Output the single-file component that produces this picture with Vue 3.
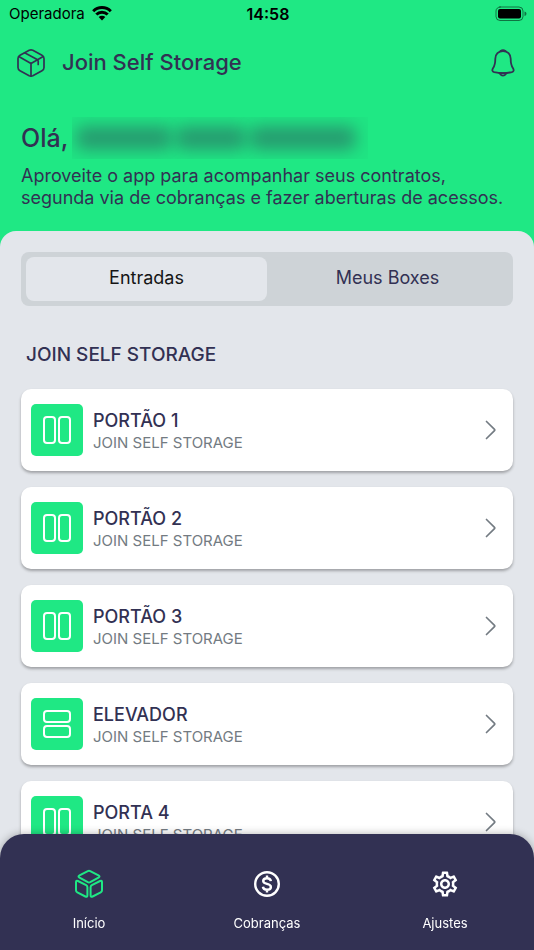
<script setup>
import { ref } from 'vue'

const tab = ref('entradas')
const page = ref('inicio')

const tabs = [
    { id: 'entradas', label: 'Entradas' },
    { id: 'boxes', label: 'Meus Boxes' },
]

const entries = [
    { name: 'PORTÃO 1', place: 'JOIN SELF STORAGE', kind: 'gate' },
    { name: 'PORTÃO 2', place: 'JOIN SELF STORAGE', kind: 'gate' },
    { name: 'PORTÃO 3', place: 'JOIN SELF STORAGE', kind: 'gate' },
    { name: 'ELEVADOR', place: 'JOIN SELF STORAGE', kind: 'lift' },
    { name: 'PORTA 4', place: 'JOIN SELF STORAGE', kind: 'gate' },
]

const pages = [
    { id: 'inicio', label: 'Início' },
    { id: 'cobrancas', label: 'Cobranças' },
    { id: 'ajustes', label: 'Ajustes' },
]
</script>

<template>
    <div class="app">
        <header class="header">
            <div class="status">
                <div class="carrier">
                    <span>Operadora</span>
                    <svg class="wifi" viewBox="0 0 20 15" aria-hidden="true">
                        <path d="M1.2 5.2a12.6 12.6 0 0 1 17.6 0" />
                        <path d="M4.3 8.5a8.1 8.1 0 0 1 11.4 0" />
                        <path class="solid" d="M10 14.4 6.7 11.1a4.7 4.7 0 0 1 6.6 0z" />
                    </svg>
                </div>
                <span class="clock">14:58</span>
                <svg class="battery" viewBox="0 0 32 16" aria-hidden="true">
                    <rect class="shell" x="1" y="1" width="27" height="13.5" rx="4" />
                    <rect x="3" y="3" width="23" height="9.5" rx="2" />
                    <path class="cap" d="M29.5 5.5q2 .6 2 2.3t-2 2.3z" />
                </svg>
            </div>

            <div class="topbar">
                <svg class="box-icon" viewBox="0 0 28 28" aria-hidden="true">
                    <path d="M12.2 1.3Q14 .5 15.8 1.3L25 6.2Q27 7.3 27 9.5V18.5Q27 20.7 25 21.8L15.8 26.7Q14 27.5 12.2 26.7L3 21.8Q1 20.7 1 18.5V9.5Q1 7.3 3 6.2Z" />
                    <path d="M1.8 7.6 14 14.4 26.2 7.6M14 14.4V27M7.6 3.8 20.2 10.4Q21.2 11 21.2 12V15.400" />
                </svg>
                <h1>Join Self Storage</h1>
                <button class="bell" type="button" aria-label="Notificações">
                    <svg viewBox="0 0 24 28" aria-hidden="true">
                        <path d="M12 2C7.5 2 4.3 5.4 4.3 9.7C4.3 15 3.8 16.6 2 19.2C.8 21.5 1.3 22.6 3.2 23.1C8.5 24.3 15.5 24.3 20.8 23.1C22.7 22.6 23.2 21.5 22 19.2C20.2 16.6 19.7 15 19.7 9.7C19.7 5.4 16.5 2 12 2Z" />
                        <path d="M9.6 2Q12 .2 14.4 2ZM8.4 24.2Q12 29 15.6 24.2Z" />
                    </svg>
                </button>
            </div>

            <div class="welcome">
                <h2>
                    <span>Olá,</span>
                    <span class="hidden-name"><i class="first"></i><i class="middle"></i><i class="last"></i></span>
                </h2>
                <p>Aproveite o app para acompanhar seus contratos, segunda via de cobranças e fazer aberturas de acessos.</p>
            </div>
        </header>

        <main class="sheet">
            <div class="tabs" role="tablist">
                <button v-for="t in tabs" :key="t.id" type="button" role="tab" :aria-selected="tab === t.id"
                    :class="{ active: tab === t.id }" @click="tab = t.id">{{ t.label }}</button>
            </div>

            <h3>JOIN SELF STORAGE</h3>

            <div class="list">
                <button v-for="e in entries" :key="e.name" class="card" type="button">
                    <span class="tile">
                        <svg v-if="e.kind === 'gate'" viewBox="0 0 30 30" aria-hidden="true">
                            <rect x="2" y="2" width="11" height="26" rx="3" />
                            <rect x="17" y="2" width="11" height="26" rx="3" />
                        </svg>
                        <svg v-else viewBox="0 0 30 30" aria-hidden="true">
                            <rect x="2" y="2" width="26" height="11" rx="3" />
                            <rect x="2" y="17" width="26" height="11" rx="3" />
                        </svg>
                    </span>
                    <span class="info">
                        <span class="name">{{ e.name }}</span>
                        <span class="place">{{ e.place }}</span>
                    </span>
                    <svg class="chevron" viewBox="0 0 12 20" aria-hidden="true">
                        <path d="M1.5 1.5 9.5 9.3Q10.2 10 9.5 10.7L1.5 18.5" />
                    </svg>
                </button>
            </div>
        </main>

        <nav class="navbar">
            <button v-for="p in pages" :key="p.id" type="button" :class="{ active: page === p.id }"
                @click="page = p.id">
                <svg v-if="p.id === 'inicio'" class="cubes" viewBox="0 0 30 30" aria-hidden="true">
                    <path d="M13.8 2.1Q15 1.5 16.2 2.1L24.500 6.400Q26.500 7.500 24.500 8.600L16.200 13.200Q15 13.800 13.800 13.200L5.500 8.600Q3.500 7.500 5.500 6.400Z" />
                    <path d="M3.9 12 12.2 16.2Q13.4 16.9 13.4 18.2V26.300Q13.400 28.500 11.400 27.500L3.300 23.300Q2 22.600 2 21.200V13.200Q2 11.100 3.900 12Z" />
                    <path d="M26.1 12 17.8 16.2Q16.600 16.900 16.600 18.200V26.300Q16.600 28.500 18.600 27.500L26.700 23.300Q28 22.600 28 21.200V13.200Q28 11.100 26.100 12Z" />
                </svg>
                <svg v-else-if="p.id === 'cobrancas'" class="coin" viewBox="0 0 30 30" aria-hidden="true">
                    <circle cx="15" cy="15" r="11.8" />
                    <path d="M18.9 12.1C18.6 10.3 17.1 9.3 15 9.3C12.8 9.3 11.2 10.3 11.2 12C11.2 15.9 18.9 13.9 18.9 17.9C18.9 19.7 17.2 20.7 15 20.7C12.8 20.7 11.2 19.6 10.9 17.7M15 6.5V9.3M15 20.7V23.5" />
                </svg>
                <svg v-else class="gear" viewBox="0 0 24 24" aria-hidden="true">
                    <path d="M19.430 12.980c.04-.32.07-.64.07-.98s-.03-.66-.07-.98l2.110-1.650c.19-.15.24-.42.120-.64l-2-3.460c-.09-.16-.26-.25-.44-.25-.06 0-.12.01-.17.030l-2.490 1c-.52-.4-1.080-.73-1.690-.98l-.38-2.650C14.460 2.180 14.250 2 14 2h-4c-.25 0-.46.18-.49.420l-.38 2.650c-.61.25-1.170.59-1.690.98l-2.490-1c-.06-.02-.12-.03-.18-.03-.17 0-.34.09-.43.250l-2 3.460c-.13.22-.07.49.120.64l2.110 1.650c-.04.32-.07.65-.07.98s.03.66.07.98l-2.110 1.650c-.19.15-.24.42-.12.640l2 3.460c.09.16.26.25.44.250.06 0 .12-.01.17-.03l2.490-1c.52.4 1.080.73 1.690.98l.38 2.650c.03.24.24.42.49.420h4c.25 0 .46-.18.49-.42l.38-2.650c.61-.25 1.170-.59 1.690-.98l2.490 1c.06.02.12.03.18.030.17 0 .34-.09.43-.25l2-3.460c.12-.22.07-.49-.12-.64l-2.110-1.650zm-1.980-1.710c.04.31.05.52.050.73s-.02.43-.05.730l-.14 1.130.89.7 1.080.84-.7 1.210-1.270-.51-1.040-.42-.9.680c-.43.32-.84.56-1.250.730l-1.060.43-.16 1.130-.2 1.350h-1.400l-.19-1.350-.16-1.130-1.060-.43c-.43-.18-.83-.41-1.230-.71l-.91-.7-1.060.43-1.270.51-.7-1.210 1.080-.84.89-.7-.14-1.130c-.03-.31-.05-.54-.05-.74s.02-.43.050-.73l.14-1.130-.89-.7-1.080-.84.7-1.210 1.270.51 1.040.42.9-.68c.43-.32.84-.56 1.250-.73l1.060-.43.16-1.130.2-1.350h1.390l.19 1.350.16 1.130 1.060.43c.43.18.83.41 1.230.710l.91.7 1.060-.43 1.270-.51.7 1.210-1.070.85-.89.7.14 1.130zM12 8c-2.210 0-4 1.790-4 4s1.790 4 4 4 4-1.790 4-4-1.790-4-4-4zm0 6c-1.100 0-2-.9-2-2s.9-2 2-2 2 .9 2 2-.9 2-2 2z" />
                </svg>
                <span>{{ p.label }}</span>
            </button>
        </nav>
    </div>
</template>

<style>
body {
    margin: 0;
    background: #1fe884;
}
</style>

<style scoped>
.app {
    height: 100vh;
    display: flex;
    flex-direction: column;
    overflow: hidden;
    background: #1fe884;
    color: #323153;
    font-family: Inter, "Liberation Sans", sans-serif;
}

h1,
h2,
h3,
p {
    margin: 0;
}

button {
    border: 0;
    padding: 0;
    background: none;
    color: inherit;
    font: inherit;
    cursor: pointer;
}

svg {
    display: block;
    fill: none;
    stroke: currentColor;
    stroke-width: 2;
    stroke-linecap: round;
    stroke-linejoin: round;
}

.status {
    display: grid;
    grid-template-columns: 1fr auto 1fr;
    align-items: center;
    height: 27px;
    padding: 0 7px 0 9px;
    color: #000;
    font-size: 15px;
}

.carrier {
    display: flex;
    align-items: center;
    gap: 7px;
}

.wifi {
    width: 20px;
    height: 15px;
    stroke-width: 3;
    stroke-linecap: butt;
}

.wifi .solid {
    fill: currentColor;
    stroke: none;
}

.clock {
    font-size: 16px;
    font-weight: 600;
}

.battery {
    width: 32px;
    height: 16px;
    justify-self: end;
    fill: currentColor;
    stroke: none;
}

.battery .shell {
    fill: none;
    stroke: currentColor;
    stroke-width: 1;
    opacity: 0.5;
}

.battery .cap {
    opacity: 0.5;
}

.topbar {
    display: flex;
    align-items: center;
    height: 72px;
    padding: 0 18px 0 17px;
}

.box-icon {
    width: 28px;
    height: 28px;
    margin-right: 17px;
    stroke-width: 1.7;
}

h1 {
    flex: 1;
    padding-bottom: 2px;
    font-size: 22px;
    line-height: 28px;
    font-weight: 500;
}

.bell svg {
    width: 26px;
    height: 28px;
    stroke-width: 1.8;
}

.welcome {
    padding: 18px 21px 22px;
}

h2 {
    display: flex;
    align-items: center;
    gap: 4px;
    height: 42px;
    font-size: 25px;
    font-weight: 500;
}

.hidden-name {
    display: flex;
    align-items: center;
    gap: 4px;
    height: 42px;
    padding: 0 12px 0 4px;
    overflow: hidden;
    background: rgba(50, 49, 83, 0.02);
}

.hidden-name i {
    height: 24px;
    border-radius: 8px;
    background: #323153;
    filter: blur(8px);
    opacity: 0.4;
}

.hidden-name .first {
    width: 96px;
}

.hidden-name .middle {
    width: 70px;
}

.hidden-name .last {
    width: 106px;
}

.welcome p {
    padding-top: 6px;
    font-size: 18px;
    line-height: 22px;
}

.sheet {
    flex: 1;
    min-height: 0;
    overflow: hidden;
    padding: 21px 21px 0;
    border-radius: 16px 16px 0 0;
    background: #e3e6eb;
}

.tabs {
    display: flex;
    padding: 5px;
    border-radius: 8px;
    background: #ced3d7;
}

.tabs button {
    flex: 1;
    height: 44px;
    padding-bottom: 3px;
    border-radius: 8px;
    font-size: 18px;
}

.tabs .active {
    background: #e3e6eb;
    color: #151515;
}

h3 {
    padding: 37px 5px 22px;
    font-size: 19px;
    line-height: 24px;
    font-weight: 500;
}

.list {
    display: flex;
    flex-direction: column;
    gap: 16px;
}

.card {
    display: flex;
    align-items: center;
    gap: 10px;
    padding: 15px 16px 15px 10px;
    border-radius: 10px;
    background: #fff;
    box-shadow: 0 2px 3px rgba(0, 0, 0, 0.3);
    text-align: left;
}

.tile {
    display: grid;
    place-items: center;
    width: 52px;
    height: 52px;
    border-radius: 5px;
    background: #1fe884;
    color: #fff;
}

.tile svg {
    width: 30px;
    height: 30px;
}

.info {
    flex: 1;
    display: flex;
    flex-direction: column;
    padding-top: 3px;
}

.name {
    font-size: 18px;
    line-height: 22px;
    font-weight: 500;
}

.place {
    color: #737b82;
    font-size: 15px;
    line-height: 22px;
}

.chevron {
    width: 12px;
    height: 20px;
    color: #737b82;
    stroke-width: 1.7;
}

.navbar {
    position: fixed;
    inset: auto 0 0;
    display: flex;
    height: 116px;
    border-radius: 24px 24px 0 0;
    background: #323153;
    box-shadow: 0 0 8px rgba(0, 0, 0, 0.3);
    color: #fff;
}

.navbar button {
    flex: 1;
    display: flex;
    flex-direction: column;
    align-items: center;
    gap: 16px;
    padding-top: 35px;
    font-size: 13px;
    line-height: 16px;
}

.navbar svg {
    width: 30px;
    height: 30px;
}

.navbar .active svg {
    color: #1fe884;
}

.navbar .coin {
    stroke-width: 2.4;
    stroke-linecap: butt;
}

.navbar .gear {
    width: 32px;
    fill: currentColor;
    stroke: none;
}
</style>
